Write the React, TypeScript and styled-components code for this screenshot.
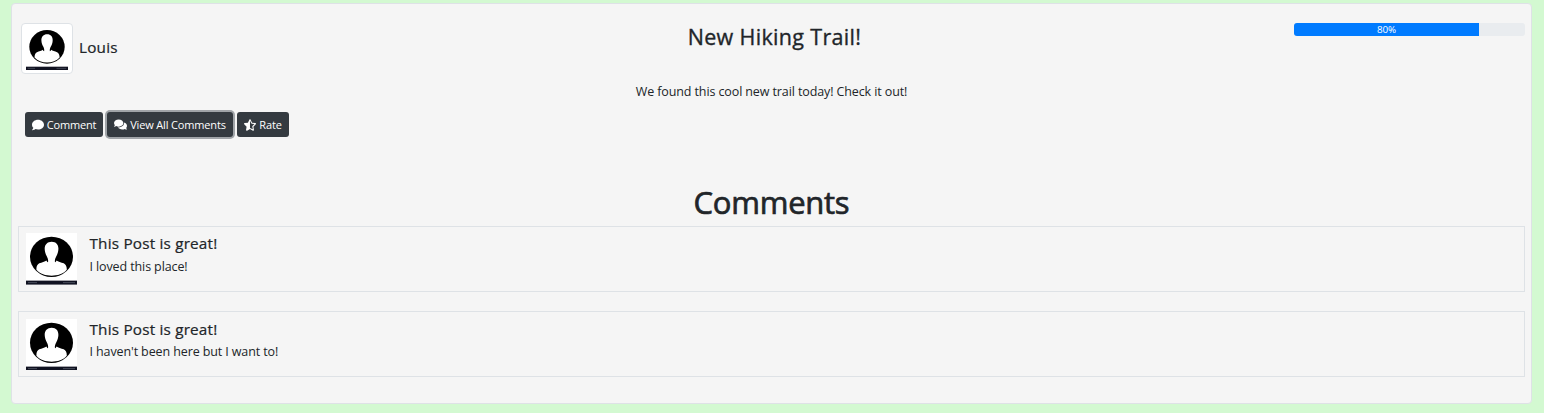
import React from "react";
import styled, { createGlobalStyle, css } from "styled-components";
import { FaComment, FaComments, FaStarHalfAlt } from "react-icons/fa";

const GlobalStyle = createGlobalStyle`
  *, *::before, *::after { box-sizing: border-box; }
  body {
    margin: 0;
    min-height: 413px;
    background: #d3f9d1;
    color: #212529;
    font-family: "Segoe UI", "Open Sans", "Noto Sans", sans-serif;
    font-size: 12.5px;
    line-height: 19px;
    letter-spacing: -0.11px;
  }
  h1, h4, h5, p { margin: 0; white-space: nowrap; }
`;

const Card = styled.main`
  margin: 3px 12px 0 11px;
  height: 401px;
  padding: 19px 6px 0;
  background: #f5f5f5;
  border: 1px solid #dee2e6;
  border-radius: 4px;
`;

const Header = styled.header`
  display: grid;
  grid-template-columns: 231px 1fr 231px;
  align-items: start;
  height: 51px;
`;

const Author = styled.div`
  display: flex;
  align-items: center;
  gap: 6px;
  padding-left: 3px;
`;

const Thumbnail = styled.div`
  width: 52px;
  height: 51px;
  padding: 3px 4px;
  background: #fff;
  border: 1px solid #dee2e6;
  border-radius: 4px;
`;

const Name = styled.h5`
  font-size: 15.3px;
  font-weight: 500;
  line-height: 19px;
  letter-spacing: 0.19px;
  -webkit-text-stroke: 0.22px currentColor;
`;

const AuthorName = styled(Name)`
  padding-bottom: 2px;
`;

const Title = styled.h4`
  padding: 1px 0 0 6px;
  text-align: center;
  font-size: 21.5px;
  font-weight: 500;
  line-height: 25px;
  letter-spacing: 0.33px;
  -webkit-text-stroke: 0.35px currentColor;
`;

const Progress = styled.div`
  height: 13px;
  overflow: hidden;
  background: #e9ecef;
  border-radius: 3px;
`;

const ProgressFill = styled.div`
  height: 100%;
  background: #007bff;
  color: #fff;
  text-align: center;
  font-size: 9.8px;
  line-height: 13px;
`;

const Message = styled.p`
  margin-top: 8px;
  text-align: center;
`;

const Actions = styled.div`
  display: flex;
  gap: 4px;
  margin-top: 11px;
  padding-left: 7px;
`;

const Button = styled.button<{ $width: number; $focused?: boolean }>`
  display: flex;
  align-items: center;
  justify-content: center;
  gap: 3px;
  width: ${(p) => p.$width}px;
  height: 25px;
  padding: 0;
  border: 0;
  border-radius: 3px;
  background: #343a40;
  color: #fff;
  font: inherit;
  font-size: 11px;
  letter-spacing: -0.16px;
  white-space: nowrap;
  ${(p) => p.$focused && css`box-shadow: 0 0 0 2px #a0a4a8;`}
`;

const SectionTitle = styled.h1`
  margin-top: 46px;
  text-align: center;
  font-size: 31px;
  font-weight: 500;
  line-height: 38px;
  letter-spacing: -0.25px;
  -webkit-text-stroke: 0.7px currentColor;
`;

const CommentList = styled.section`
  display: grid;
  gap: 19.3px;
  margin-top: 5px;
`;

const CommentBox = styled.article`
  display: flex;
  gap: 12.5px;
  height: 66px;
  padding: 6.35px 7px 0;
  border: 1px solid #dee2e6;
`;

const CommentText = styled.div`
  display: flex;
  flex-direction: column;
  gap: 3.6px;
  padding-top: 1px;
`;

const Picture = styled.svg`
  display: block;
`;

function Avatar({ width, height }: { width: number; height: number }) {
  return (
    <Picture width={width} height={height} viewBox="0 0 51 52" preserveAspectRatio="none">
      <rect width="51" height="52" fill="#fff" />
      <ellipse cx="25.5" cy="24" rx="21.5" ry="20.3" fill="#000" />
      <path
        d="M25.7 8.7c-4.400 0-7.200 3-7 7.500.1 3 1 5.400 2.200 7.400 1.100 2 1.500 3.800 1.100 5.800-.9-.3-1.200-1-1.500-1.800-1.500 1.300-4.700 1.700-7.200 3-2 1-3 3.100-2.900 6.400 3.600 4.100 9.300 6 15.200 6s11.700-1.900 15.200-6c.1-3.300-1.100-5.400-3.100-6.400-2.500-1.300-5.700-1.700-7.200-3-.3.800-.6 1.500-1.500 1.800-.4-2 .1-3.800 1.200-5.800 1.200-2 2.100-4.400 2.200-7.400.2-4.500-2.300-7.500-6.700-7.500z"
        fill="#fff"
      />
      <rect y="48" width="51" height="4" fill="#101221" />
      <path d="M2 50h9M37 50h12" stroke="#555968" strokeWidth="0.8" />
    </Picture>
  );
}

const comments = [
  { title: "This Post is great!", body: "I loved this place!" },
  { title: "This Post is great!", body: "I haven't been here but I want to!" },
];

export default function App() {
  const rating = 80;
  return (
    <>
      <GlobalStyle />
      <Card>
        <Header>
          <Author>
            <Thumbnail>
              <Avatar width={42} height={43} />
            </Thumbnail>
            <AuthorName>Louis</AuthorName>
          </Author>
          <Title>New Hiking Trail!</Title>
          <Progress>
            <ProgressFill style={{ width: `${rating}%` }}>{rating}%</ProgressFill>
          </Progress>
        </Header>
        <Message>We found this cool new trail today! Check it out!</Message>
        <Actions>
          <Button $width={78}><FaComment size={12} />Comment</Button>
          <Button $width={126} $focused><FaComments size={13} />View All Comments</Button>
          <Button $width={52}><FaStarHalfAlt size={12} />Rate</Button>
        </Actions>
        <SectionTitle>Comments</SectionTitle>
        <CommentList>
          {comments.map((comment) => (
            <CommentBox key={comment.body}>
              <Avatar width={51} height={51.6} />
              <CommentText>
                <Name>{comment.title}</Name>
                <p>{comment.body}</p>
              </CommentText>
            </CommentBox>
          ))}
        </CommentList>
      </Card>
    </>
  );
}
